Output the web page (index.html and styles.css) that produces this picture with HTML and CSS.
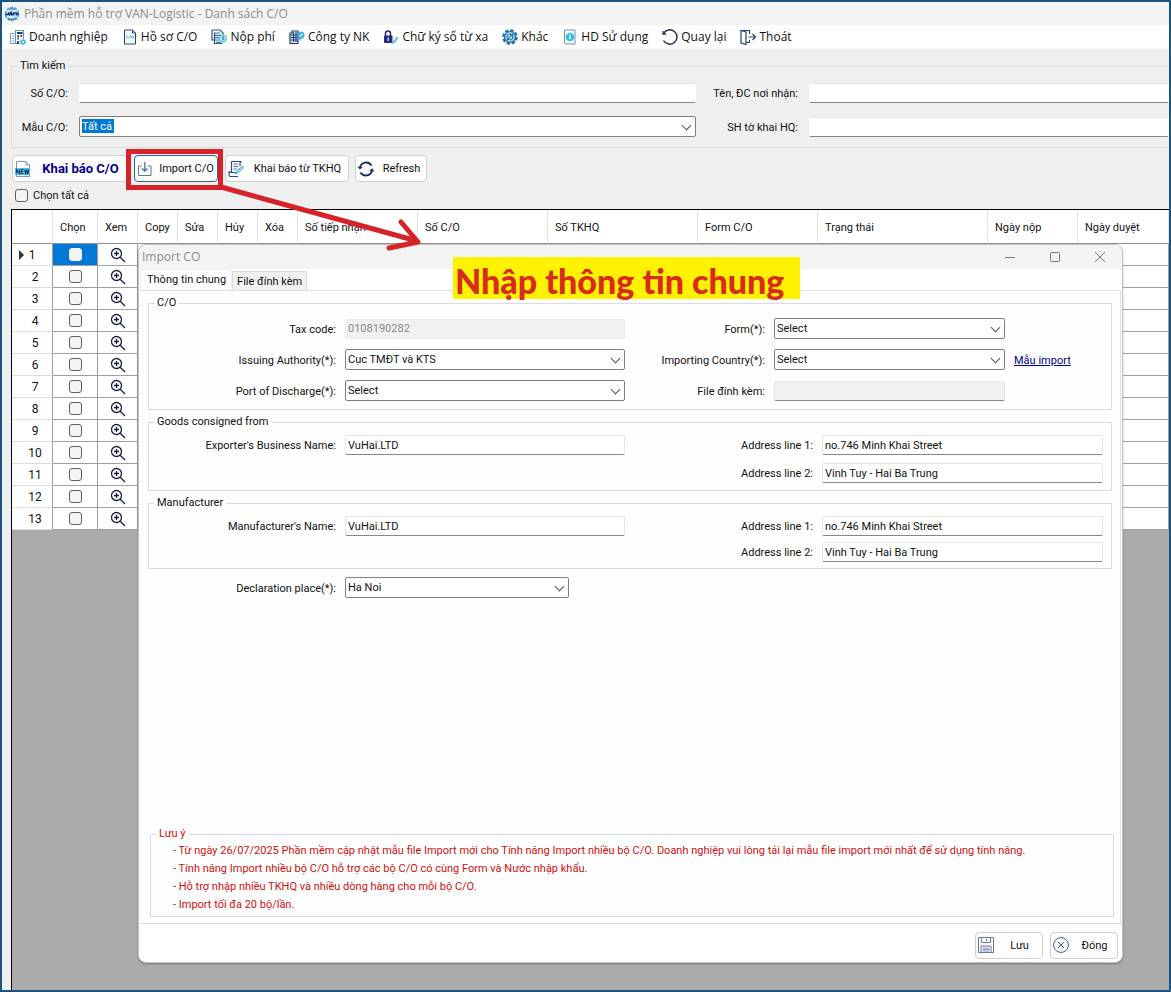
FILE: index.html
```html
<!DOCTYPE html>
<html lang="vi">
<head>
    <meta charset="UTF-8">
    <meta name="viewport" content="width=device-width, initial-scale=1.0">
    <title>Phần mềm hỗ trợ VAN-Logistic - Danh sách C/O</title>
    <link rel="stylesheet" href="styles.css">
</head>
<body>
    <div class="app">
        <!-- Thanh tiêu đề -->
        <header class="titlebar">
            <svg class="icon" viewBox="0 0 16 16">
                <circle cx="8" cy="8" r="6.500" fill="#d5ecf8" stroke="#4aa3dc" stroke-width="1.600" stroke-dasharray="3 1"/>
                <path d="M1 8.500h3l1-2M5 9.500l2-3 1 3M9.500 9.500V7h3v2.500M13 8h2" fill="none" stroke="#123a72" stroke-width="1.700"/>
                <path d="M4 12.500q4 2 8-.5M5 3.500q3-1.500 6 0" fill="none" stroke="#1d6fb8" stroke-width="1.200"/>
            </svg>
            <span>Phần mềm hỗ trợ VAN-Logistic - Danh sách C/O</span>
        </header>

        <!-- Menu chính -->
        <nav class="menu">
            <a class="menu-item" href="#">
                <svg class="icon" viewBox="0 0 16 16">
                    <path d="M.5 14.500V4.500h4M2 7h2M2 9.500h2M2 12h2" fill="none" stroke="#7fa0cc"/>
                    <path d="M5.500 15V1.500h8V10M.5 14.500h9" fill="none" stroke="#6f8fc0" stroke-width="1.200"/>
                    <path d="M7 4h5.500M7.500 7h1.500M10.500 7h1.500M7.500 9.500h1.500M8 15v-3" stroke="#1c3a78" stroke-width="1.800"/>
                    <circle cx="13" cy="13" r="2.800" fill="#3fbbe0"/><circle cx="13" cy="13" r=".9" fill="#fff"/>
                </svg>Doanh nghiệp</a>
            <a class="menu-item" href="#">
                <svg class="icon" viewBox="0 0 16 16">
                    <path d="M2.500 1h8l3 3v11h-11zM10.500 1v3h3" fill="#fff" stroke="#24426f"/>
                    <path d="M6.500 7a1.300 1.300 0 1 0 0 2M7.300 9.700l1.400-3.400" fill="none" stroke="#39b3d8" stroke-width=".9"/>
                    <circle cx="10.700" cy="8" r="1.200" fill="none" stroke="#39b3d8" stroke-width=".9"/>
                </svg>Hồ sơ C/O</a>
            <a class="menu-item" href="#">
                <svg class="icon" viewBox="0 0 16 16">
                    <path d="M1 1h8l3 3v2M1 1v10h2M3.500 3.500v11h8" fill="none" stroke="#2b4f8a" stroke-width="1.200"/>
                    <path d="M4 4h5M4 6.300h6M4 8.600h4M4 11h4M5 13.200h5" stroke="#3e6fb5" stroke-width="1.200"/>
                    <circle cx="12" cy="9.500" r="3.600" fill="#bdeaf6" stroke="#41b8d8"/>
                    <path d="M13 8.200q-2-.8-2 .3t2 1-2 1.300M12 7.500v4" fill="none" stroke="#1f8fb4" stroke-width=".8"/>
                </svg>Nộp phí</a>
            <a class="menu-item" href="#">
                <svg class="icon" viewBox="0 0 16 16">
                    <path d="M1 14.500V4h2V2h6v12.500z" fill="#dbe6f5" stroke="#213b77" stroke-width="1.200"/>
                    <path d="M4.500 3v10M7 3v10M2 6h6M2 8.500h6M2 11h6" stroke="#213b77" stroke-width="1.100"/>
                    <circle cx="12" cy="6" r="3.600" fill="#36b5dd"/><path d="M10 9l1 3 2-3z" fill="#36b5dd"/>
                    <path d="M11 7.500l2.500-2.500" stroke="#fff" stroke-width="1.100"/>
                </svg>Công ty NK</a>
            <a class="menu-item" href="#">
                <svg class="icon" viewBox="0 0 16 16">
                    <path d="M2.500 7V4.500a2.500 2.500 0 0 1 5 0V7" fill="none" stroke="#2a2b7c" stroke-width="1.500"/>
                    <rect x="1" y="6.500" width="8.500" height="7.500" rx=".8" fill="#2a2b7c"/>
                    <path d="M5.200 8.500v3.500" stroke="#cfd6f2" stroke-width="1.400"/>
                    <path d="M9 14q3-1 5.500-6" fill="none" stroke="#57c4e6" stroke-width="2.200"/>
                </svg>Chữ ký số từ xa</a>
            <a class="menu-item" href="#">
                <svg class="icon" viewBox="0 0 16 16">
                    <circle cx="8" cy="8" r="6.600" fill="none" stroke="#236f9e" stroke-width="2.400" stroke-dasharray="3.400 1.780"/>
                    <circle cx="8" cy="8" r="5.500" fill="#8fd0ea" stroke="#236f9e" stroke-width="1.200"/>
                    <circle cx="8" cy="8" r="2.800" fill="#d9f0fa" stroke="#236f9e"/>
                    <path d="M5 11l6-6" stroke="#236f9e" stroke-width="1.200"/>
                </svg>Khác</a>
            <a class="menu-item" href="#">
                <svg class="icon" viewBox="0 0 16 16">
                    <path d="M2.500 1h10.500v14h-9.500l-1-1z" fill="#f4fbfe" stroke="#7890a8"/>
                    <circle cx="8" cy="8" r="4.300" fill="#35bfe0"/>
                    <path d="M8 7v3.200M8 5.200v1" stroke="#fff" stroke-width="1.300"/>
                </svg>HD Sử dụng</a>
            <a class="menu-item" href="#">
                <svg class="icon" viewBox="0 0 16 16">
                    <path d="M1.500 4.500A7.200 7.200 0 1 1 1.500 11.500" fill="none" stroke="#1f2f55" stroke-width="1.500"/>
                    <path d="M1 2v3h3" fill="none" stroke="#1f2f55" stroke-width="1.300"/>
                </svg>Quay lại</a>
            <a class="menu-item" href="#">
                <svg class="icon" viewBox="0 0 16 16">
                    <path d="M1 1.500l5 1.500v12.500l-5-1.500zM1 1.500h8.500V5M6 13.500h3.500V11" fill="none" stroke="#24426f" stroke-width="1.200"/>
                    <path d="M8.500 8h6.500M12.500 5l3 3-3 3" fill="none" stroke="#24426f" stroke-width="1.200"/>
                </svg>Thoát</a>
        </nav>

        <!-- Tìm kiếm -->
        <fieldset class="group search">
            <legend>Tìm kiếm</legend>
            <div class="search-grid">
                <label for="so-co">Số C/O:</label>
                <input class="text-box" id="so-co" type="text">
                <label for="noi-nhan">Tên, ĐC nơi nhận:</label>
                <input class="text-box" id="noi-nhan" type="text">
                <label for="mau-co">Mẫu C/O:</label>
                <div class="combo"><select class="highlighted" id="mau-co"><option>Tất cả</option></select></div>
                <label for="to-khai">SH tờ khai HQ:</label>
                <input class="text-box" id="to-khai" type="text">
            </div>
        </fieldset>

        <!-- Thanh công cụ -->
        <div class="toolbar">
            <button class="btn btn-new" type="button">
                <svg class="icon" viewBox="0 0 16 16">
                    <path d="M1.500 .5h9.500l3.500 3.500v11.500h-13zM11 .5V4h3.500" fill="#fff" stroke="#7f97ad"/>
                    <rect x="0" y="7" width="15" height="7" fill="#4cc3ee"/>
                    <path d="M1.500 12.500V8.500l3 4V8.500M8.500 8.500H6.300v4h2.200M6.300 10.500h2M9.700 8.500l1 4 1-3 1 3 1-4" fill="none" stroke="#0f3c66" stroke-width="1.100"/>
                </svg><span>Khai báo C/O</span></button>
            <button class="btn btn-import" type="button">
                <svg class="icon" viewBox="0 0 16 16">
                    <path d="M4.500 5H1.500v9.500h12.500V5h-3" fill="none" stroke="#5a72a0"/>
                    <path d="M7.750 1v9M5 7.500l2.750 2.750L10.500 7.500" fill="none" stroke="#3a66b0" stroke-width="1.200"/>
                </svg><span>Import C/O</span></button>
            <button class="btn btn-tkhq" type="button">
                <svg class="icon" viewBox="0 0 16 16">
                    <path d="M3 1.500q.5-1 1.500-1h9q-1.500.5-1.500 2V5M3.500 1.500V11H1v3q0 1.500 1.500 1.500h7.500M1 11.500h7" fill="none" stroke="#2b4f8a" stroke-width="1.200"/>
                    <path d="M5.500 3h4.500M5.500 5.500h4.500M5.500 8h3" stroke="#4c6ea6"/>
                    <path d="M7.500 13l1-3 6-5 1.200 1.500-6 5.500z" fill="#a9e0f5" stroke="#4aa9d0"/>
                </svg><span>Khai báo từ TKHQ</span></button>
            <button class="btn btn-refresh" type="button">
                <svg class="icon" viewBox="0 0 16 16">
                    <path d="M2 6.500A6.300 6.300 0 0 1 13.500 4.500M14 9.500A6.300 6.300 0 0 1 2.500 11.500" fill="none" stroke="#1c2e5c" stroke-width="1.800"/>
                    <path d="M-.5 5.500l2.300 3.200L4.600 6zM16.500 10.500l-2.300-3.200L11.400 10z" fill="#1c2e5c"/>
                </svg><span>Refresh</span></button>
        </div>
        <div class="check-all">
            <input class="check" id="chon-tat-ca" type="checkbox">
            <label for="chon-tat-ca">Chọn tất cả</label>
        </div>

        <!-- Danh sách C/O -->
        <main class="list">
            <table class="co-table">
                <colgroup>
                    <col class="w-40"><col class="w-45"><col class="w-40"><col class="w-40"><col class="w-40"><col class="w-40"><col class="w-40"><col class="w-120"><col class="w-130"><col class="w-150"><col class="w-120"><col class="w-170"><col class="w-90"><col>
                </colgroup>
                <thead>
                    <tr>
                        <th></th><th>Chọn</th><th>Xem</th><th>Copy</th><th>Sửa</th><th>Hủy</th><th>Xóa</th><th>Số tiếp nhận</th><th>Số C/O</th><th>Số TKHQ</th><th>Form C/O</th><th>Trạng thái</th><th>Ngày nộp</th><th>Ngày duyệt</th>
                    </tr>
                </thead>
                <tbody id="co-rows"></tbody>
            </table>
        </main>

        <!-- Cửa sổ Import CO -->
        <section class="dialog">
            <header class="dialog-title">
                <span>Import CO</span>
                <div class="window-buttons">
                    <button type="button" aria-label="Thu nhỏ"><svg viewBox="0 0 12 12"><path d="M1 6.500h10"/></svg></button>
                    <button type="button" aria-label="Phóng to"><svg viewBox="0 0 12 12"><rect x="1.500" y="1.500" width="9" height="9" rx="1"/></svg></button>
                    <button type="button" aria-label="Đóng cửa sổ"><svg viewBox="0 0 12 12"><path d="M1 1l10 10M11 1L1 11"/></svg></button>
                </div>
            </header>
            <div class="tabs">
                <button class="tab active" type="button">Thông tin chung</button>
                <button class="tab" type="button">File đính kèm</button>
            </div>
            <div class="panel">
                <fieldset class="group">
                    <legend>C/O</legend>
                    <div class="co-grid">
                        <label for="tax">Tax code:</label>
                        <input class="text-box" id="tax" type="text" value="0108190282" disabled>
                        <label for="form">Form(*):</label>
                        <div class="combo"><select id="form"><option>Select</option></select></div>
                        <span></span>
                        <label for="authority">Issuing Authority(*):</label>
                        <div class="combo"><select id="authority"><option>Cục TMĐT và KTS</option></select></div>
                        <label for="country">Importing Country(*):</label>
                        <div class="combo"><select id="country"><option>Select</option></select></div>
                        <a class="template-link" href="#">Mẫu import</a>
                        <label for="port">Port of Discharge(*):</label>
                        <div class="combo"><select id="port"><option>Select</option></select></div>
                        <label for="file">File đính kèm:</label>
                        <input class="text-box readonly" id="file" type="text" readonly>
                    </div>
                </fieldset>
                <fieldset class="group">
                    <legend>Goods consigned from</legend>
                    <div class="party-grid goods">
                        <label for="exporter">Exporter's Business Name:</label>
                        <input class="text-box" id="exporter" type="text" value="VuHai.LTD">
                        <label for="goods-1">Address line 1:</label>
                        <input class="text-box" id="goods-1" type="text" value="no.746 Minh Khai Street">
                        <label class="second" for="goods-2">Address line 2:</label>
                        <input class="text-box" id="goods-2" type="text" value="Vinh Tuy - Hai Ba Trung">
                    </div>
                </fieldset>
                <fieldset class="group">
                    <legend>Manufacturer</legend>
                    <div class="party-grid">
                        <label for="maker">Manufacturer's Name:</label>
                        <input class="text-box" id="maker" type="text" value="VuHai.LTD">
                        <label for="maker-1">Address line 1:</label>
                        <input class="text-box" id="maker-1" type="text" value="no.746 Minh Khai Street">
                        <label class="second" for="maker-2">Address line 2:</label>
                        <input class="text-box" id="maker-2" type="text" value="Vinh Tuy - Hai Ba Trung">
                    </div>
                </fieldset>
                <div class="place">
                    <label for="place">Declaration place(*):</label>
                    <div class="combo"><select id="place"><option>Ha Noi</option></select></div>
                </div>
                <fieldset class="group note">
                    <legend>Lưu ý</legend>
                    <p>- Từ ngày 26/07/2025 Phần mềm cập nhật mẫu file Import mới cho Tính năng Import nhiều bộ C/O. Doanh nghiệp vui lòng tải lại mẫu file import mới nhất để sử dụng tính năng.</p>
                    <p>- Tính năng Import nhiều bộ C/O hỗ trợ các bộ C/O có cùng Form và Nước nhập khẩu.</p>
                    <p>- Hỗ trợ nhập nhiều TKHQ và nhiều dòng hàng cho mỗi bộ C/O.</p>
                    <p>- Import tối đa 20 bộ/lần.</p>
                </fieldset>
            </div>
            <footer class="dialog-footer">
                <button class="btn btn-small" type="button">
                    <svg class="icon" viewBox="0 0 16 16">
                        <path d="M.5.5h15v15H.5zM3.500.5v5h9v-5M8.500 2v2" fill="none" stroke="#6678a8"/>
                        <path d="M3 15V9h10v6" fill="none" stroke="#6678a8"/>
                        <path d="M4.500 11h7M4.500 12.500h7M4.500 14h7" stroke="#8796bd"/>
                    </svg><span>Lưu</span></button>
                <button class="btn btn-small" type="button">
                    <svg class="icon" viewBox="0 0 16 16">
                        <circle cx="8" cy="8" r="7.400" fill="none" stroke="#4a5c8c"/>
                        <path d="M5 5l6 6M11 5l-6 6" stroke="#4a5c8c"/>
                    </svg><span>Đóng</span></button>
            </footer>
        </section>

        <!-- Chú thích hướng dẫn -->
        <div class="mark-box"></div>
        <svg class="mark-arrow" viewBox="0 0 206 70">
            <path d="M2 5L198 59M182 40L199 60L170 66" fill="none" stroke="#d6232a" stroke-width="5" stroke-linecap="round" stroke-linejoin="round"/>
        </svg>
        <div class="mark-text">Nhập thông tin chung</div>
    </div>

    <script>
        const rows = document.getElementById("co-rows");

        // Tạo 13 dòng trong bảng
        for (let i = 1; i <= 13; i++) {
            const row = document.createElement("tr");
            row.innerHTML = `
                <th class="${i === 1 ? "current" : ""}">${i}</th>
                <td class="${i === 1 ? "selected" : ""}"><input class="check" type="checkbox" aria-label="Chọn dòng ${i}"></td>
                <td><button class="view-btn" type="button" aria-label="Xem dòng ${i}">
                    <svg viewBox="0 0 16 16"><circle cx="6.500" cy="6.500" r="5"/><path d="M10.200 10.200l4.800 4.800M6.500 4v5M4 6.500h5"/></svg>
                </button></td>
                ${"<td></td>".repeat(11)}
            `;
            rows.appendChild(row);
        }
    </script>
</body>
</html>
```
FILE: styles.css
```css
* {
    box-sizing: border-box;
}

body {
    margin: 0;
    font-family: Roboto, "Liberation Sans", Arial, sans-serif;
    font-size: 11px;
    line-height: 14px;
    color: #111;
}

input,
select,
button {
    font: inherit;
    color: inherit;
    margin: 0;
}

.app {
    position: relative;
    display: flex;
    flex-direction: column;
    min-height: 100vh;
    border: 2px solid #1b5480;
    background-color: #efefef;
    overflow: hidden;
}

.icon {
    width: 16px;
    height: 16px;
    flex: none;
    overflow: visible;
}

/* Thanh tiêu đề và menu */
.titlebar {
    display: flex;
    align-items: center;
    gap: 4px;
    height: 23px;
    padding-left: 2px;
    background-color: #f3f3f3;
    color: #8c8c8c;
    font-family: "Open Sans", "Noto Sans", sans-serif;
    font-size: 12px;
}

.menu {
    display: flex;
    align-items: center;
    gap: 14px;
    height: 24px;
    padding-left: 8px;
    background-color: #fff;
    font-family: "Open Sans", "Noto Sans", sans-serif;
    font-size: 12px;
}

.menu-item {
    display: flex;
    align-items: center;
    gap: 3px;
    color: #111;
    text-decoration: none;
    white-space: nowrap;
}

/* Khung nhóm */
.group {
    min-width: 0;
    margin: 0;
    padding: 0;
    border: 1px solid #d9dcde;
}

.group legend {
    margin-left: 5px;
    padding: 0 3px;
}

.group label,
.place label {
    padding-top: 2px;
    text-align: right;
    white-space: nowrap;
}

.text-box {
    width: 100%;
    min-width: 0;
    height: 20px;
    padding: 0 2px;
    border: 1px solid #e6e6e6;
    border-bottom-color: #868686;
    border-radius: 2px;
    background-color: #fff;
}

.text-box:disabled,
.text-box.readonly {
    background-color: #f0f0f0;
    color: #888;
}

.text-box:disabled {
    border-color: #ececec;
}

.combo {
    position: relative;
}

.combo::after {
    content: "";
    position: absolute;
    right: 6px;
    top: 6px;
    width: 6px;
    height: 6px;
    border-right: 1px solid #555;
    border-bottom: 1px solid #555;
    transform: rotate(45deg);
    pointer-events: none;
}

.combo select {
    display: block;
    width: 100%;
    height: 21px;
    padding: 0 20px 0 2px;
    border: 1px solid #7f7f7f;
    border-radius: 2px;
    background-color: #fff;
    appearance: none;
}

.combo select.highlighted {
    color: #fff;
    background-image: linear-gradient(#0078d4, #0078d4);
    background-size: 32px 14px;
    background-position: 2px 2px;
    background-repeat: no-repeat;
}

.search {
    margin: 10px 0 0 9px;
    border-right: 0;
    border-color: #dcdcdc;
}

.search-grid {
    display: grid;
    grid-template-columns: 56px 617fr 91px 360fr;
    gap: 13px 11px;
    align-items: center;
    padding: 10px 0;
}

.search-grid .text-box {
    border-color: #e6e6e6 transparent #868686;
}

/* Nút và thanh công cụ */
.toolbar {
    display: flex;
    gap: 6px;
    padding: 7px 10px 0;
}

.btn {
    display: flex;
    align-items: center;
    gap: 3px;
    height: 27px;
    padding: 0 2px;
    border: 1px solid #d0d0d0;
    border-radius: 4px;
    background-color: #fdfdfd;
    white-space: nowrap;
}

.btn span {
    flex: 1;
    padding: 1px 0 0 2px;
    text-align: center;
}

.btn-new {
    width: 116px;
    color: #00008b;
    font-size: 13px;
    font-weight: bold;
}

.btn-import {
    width: 84px;
    border-color: #2d6496;
}

.btn-tkhq {
    width: 124px;
    margin-left: 1px;
}

.btn-refresh {
    width: 72px;
}

.btn-small {
    width: 68px;
}

.check-all {
    display: flex;
    align-items: center;
    gap: 5px;
    height: 27px;
    padding-left: 13px;
}

.check {
    display: block;
    width: 13px;
    height: 13px;
    border: 1px solid #5f5f5f;
    border-radius: 3px;
    background-color: #f4f4f4;
    appearance: none;
}

/* Bảng danh sách */
.list {
    flex: 1;
    margin-left: 9px;
    border-top: 1px solid #000;
    border-left: 1px solid #000;
    background-color: #ababab;
}

.co-table {
    width: 100%;
    table-layout: fixed;
    border-collapse: separate;
    border-spacing: 0;
    background-color: #fff;
}

.w-40 { width: 41px; }
.w-40 ~ .w-40 { width: 40px; }
.w-45 { width: 45px; }
.w-90 { width: 90px; }
.w-120 { width: 120px; }
.w-130 { width: 130px; }
.w-150 { width: 150px; }
.w-170 { width: 170px; }

.co-table th {
    font-weight: normal;
}

.co-table thead th {
    height: 34px;
    padding: 3px 0 0 7px;
    border-right: 1px solid #e2e2e2;
    border-bottom: 1px solid #8f8f8f;
    text-align: left;
    white-space: nowrap;
}

.co-table tbody th,
.co-table td {
    height: 22px;
    padding: 0;
    border-right: 1px solid #a0a0a0;
    border-bottom: 1px solid #a0a0a0;
    text-align: center;
}

.co-table tbody th {
    padding-left: 6px;
    border-bottom-color: #dedede;
    font-size: 12px;
}

.co-table .current::before {
    content: "";
    display: inline-block;
    margin-right: 5px;
    border: 5px solid transparent;
    border-left-color: #333;
    border-right: 0;
    vertical-align: -1px;
}

.co-table tbody .current {
    padding: 0 10px 0 0;
}

.co-table td .check {
    margin: 0 auto;
}

.co-table .selected {
    background-color: #0078d7;
}

.co-table .selected .check {
    border-color: #f4f4f4;
}

.view-btn {
    display: block;
    width: 16px;
    height: 16px;
    margin: 0 auto;
    padding: 0;
    border: 0;
    background: none;
}

.view-btn svg {
    display: block;
    width: 16px;
    height: 16px;
    fill: none;
    stroke: #1a2140;
    stroke-width: 1.3;
}

/* Cửa sổ Import CO */
.dialog {
    position: absolute;
    top: 242px;
    right: 46px;
    bottom: 27px;
    left: 136px;
    display: flex;
    flex-direction: column;
    border: 1px solid #c4c4c4;
    border-radius: 8px;
    background-color: #fff;
    box-shadow: 0 1px 2px rgba(0, 0, 0, 0.3);
    overflow: hidden;
}

.dialog-title {
    display: flex;
    align-items: center;
    justify-content: space-between;
    height: 24px;
    padding: 0 16px 0 3px;
    background-color: #f3f3f3;
    color: #8c8c8c;
    font-family: "Open Sans", "Noto Sans", sans-serif;
    font-size: 12px;
}

.window-buttons {
    display: flex;
    gap: 33px;
}

.window-buttons button {
    width: 12px;
    height: 12px;
    padding: 0;
    border: 0;
    background: none;
}

.window-buttons svg {
    display: block;
    fill: none;
    stroke: #7a7a7a;
}

.tabs {
    display: flex;
    align-items: flex-end;
    height: 21px;
    padding-left: 1px;
}

.tab {
    height: 19px;
    padding: 1px 4px 0;
    border: 1px solid #dcdcdc;
    border-bottom: 0;
    background-color: #f0f0f0;
    white-space: nowrap;
}

.tab.active {
    height: 21px;
    padding: 0 5px 0 6px;
    border-color: #f0f0f0;
    background-color: #fdfdfd;
}

.panel {
    flex: 1;
    display: flex;
    flex-direction: column;
    gap: 5px;
    margin-right: 1px;
    padding: 5px 8px 6px 9px;
    border-top: 1px solid #e0e0e0;
    border-right: 1px solid #e0e0e0;
    background-color: #fefefe;
}

.co-grid,
.party-grid,
.place {
    display: grid;
    column-gap: 9px;
    align-items: center;
}

.co-grid {
    grid-template-columns: 187px 280fr 131px 231fr 89px;
    grid-auto-rows: 21px;
    row-gap: 10px;
    padding: 8px 8px 8px 0;
}

.party-grid {
    grid-template-columns: 187px 280fr 179px 281fr;
    row-gap: 6px;
    padding: 6px 8px 6px 0;
}

.party-grid.goods {
    row-gap: 8px;
    padding-bottom: 7px;
}

.party-grid .second {
    grid-column: 3;
}

.place {
    grid-template-columns: 188px 224px;
    margin-top: 3px;
}

.template-link {
    padding-top: 2px;
    color: #00008b;
}

.note {
    margin-top: auto;
    margin-right: -2px;
    margin-left: 2px;
    padding: 1px 0 2px;
    color: #d00f0f;
}

.note p {
    margin: 0;
    padding-left: 22px;
    line-height: 18px;
}

.dialog-footer {
    display: flex;
    align-items: center;
    justify-content: flex-end;
    gap: 7px;
    height: 39px;
    padding: 4px 4px 0;
    border-top: 1px solid #e0e0e0;
}

/* Chú thích hướng dẫn */
.mark-box {
    position: absolute;
    top: 147px;
    left: 124px;
    width: 97px;
    height: 41px;
    border: 5px solid #d6232a;
}

.mark-arrow {
    position: absolute;
    top: 180px;
    left: 217px;
    width: 206px;
    height: 70px;
}

.mark-text {
    position: absolute;
    top: 255px;
    left: 451px;
    width: 347px;
    height: 42px;
    padding-left: 2px;
    background-color: #fff200;
    color: #d92a1c;
    font-family: Lato, "Open Sans", sans-serif;
    font-size: 34px;
    font-weight: 900;
    line-height: 48px;
    white-space: nowrap;
}
```
